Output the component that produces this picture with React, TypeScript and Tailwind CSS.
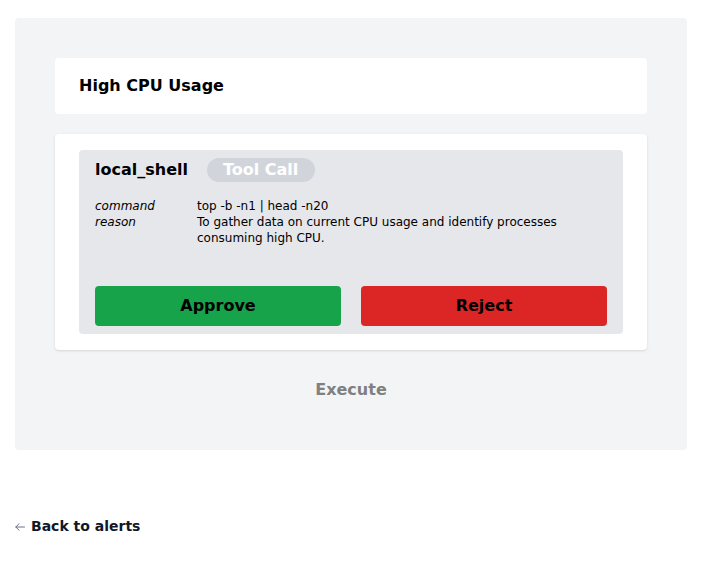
export default function App() {
  return (
    <div className="min-h-screen bg-white px-[15px] pt-[18px] text-gray-900" style={{ fontFamily: '"DejaVu Sans", sans-serif' }}>
      <div className="rounded bg-[#f3f4f6] px-10 pt-10 pb-10">
        <div className="flex h-14 items-center rounded bg-white px-6">
          <h1 className="text-base font-bold text-black">High CPU Usage</h1>
        </div>

        <div className="mt-5 rounded bg-white px-6 py-4 shadow-sm">
          <div className="rounded bg-[#e5e7eb] px-4 pt-2 pb-2">
            <div className="flex items-center gap-[19px]">
              <span className="text-base font-bold text-black">local_shell</span>
              <span className="flex h-6 items-center rounded-full bg-[#d1d5db] pl-4 pr-[17px] text-base font-bold text-white">
                Tool Call
              </span>
            </div>

            <div className="mt-4 grid grid-cols-[102px_1fr] text-xs leading-4 text-black">
              <span className="italic">command</span>
              <span>top -b -n1 | head -n20</span>
              <span className="italic">reason</span>
              <span className="pr-10">To gather data on current CPU usage and identify processes consuming high CPU.</span>
            </div>

            <div className="mt-10 grid grid-cols-2 gap-5">
              <button className="h-10 rounded bg-[#16a34a] text-base font-bold text-black">Approve</button>
              <button className="h-10 rounded bg-[#dc2626] text-base font-bold text-black">Reject</button>
            </div>
          </div>
        </div>

        <div className="mt-5 flex h-10 items-center justify-center">
          <button className="text-base font-bold text-[#808080]">Execute</button>
        </div>
      </div>

      <a className="mt-[66px] flex items-center gap-[6px] text-sm font-bold text-gray-900">
        <svg width="10" height="10" viewBox="0 0 10 10" fill="none" stroke="#6b7280" strokeWidth="1" strokeLinecap="round" strokeLinejoin="round" className="mt-[1px]">
          <path d="M9.5 5H0.8M4 1.8L0.8 5L4 8.2" />
        </svg>
        Back to alerts
      </a>
    </div>
  );
}
